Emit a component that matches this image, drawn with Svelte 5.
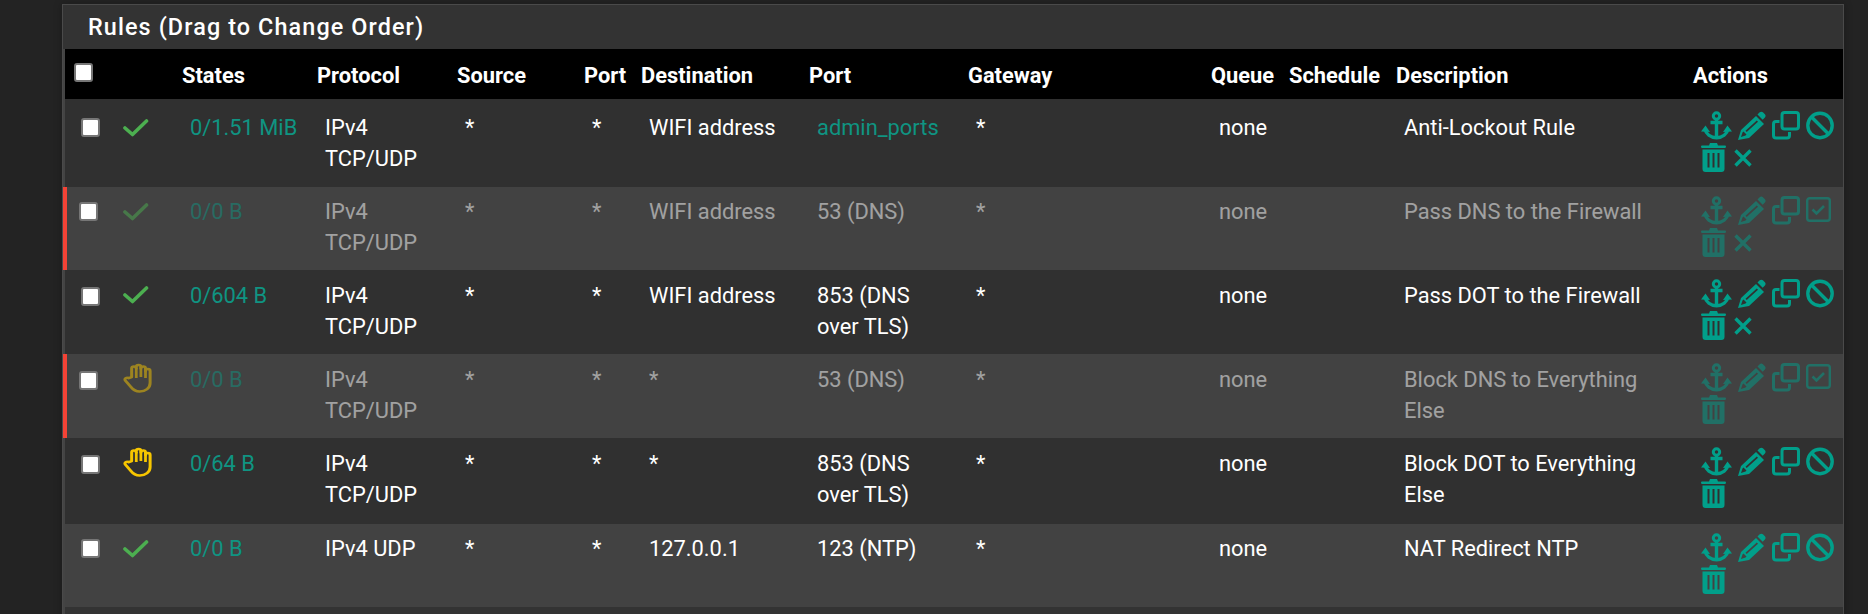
<script>
  // rule table rows, h is the row height taken from the page
  const rules = [
    { h: 88, off: false, icon: "pass", states: "0/1.51 MiB", proto: ["IPv4", "TCP/UDP"], dest: "WIFI address", port: "admin_ports", link: true, desc: "Anti-Lockout Rule", x: true },
    { h: 83, off: true, icon: "pass", states: "0/0 B", proto: ["IPv4", "TCP/UDP"], dest: "WIFI address", port: "53 (DNS)", desc: "Pass DNS to the Firewall", x: true },
    { h: 84, off: false, icon: "pass", states: "0/604 B", proto: ["IPv4", "TCP/UDP"], dest: "WIFI address", port: "853 (DNS over TLS)", desc: "Pass DOT to the Firewall", x: true },
    { h: 84, off: true, icon: "block", states: "0/0 B", proto: ["IPv4", "TCP/UDP"], dest: "*", port: "53 (DNS)", desc: "Block DNS to Everything Else", x: false },
    { h: 86, off: false, icon: "block", states: "0/64 B", proto: ["IPv4", "TCP/UDP"], dest: "*", port: "853 (DNS over TLS)", desc: "Block DOT to Everything Else", x: false },
    { h: 83, off: false, icon: "pass", states: "0/0 B", proto: ["IPv4 UDP"], dest: "127.0.0.1", port: "123 (NTP)", desc: "NAT Redirect NTP", x: false }
  ];

  const cols = [49, 60, 135, 140, 127, 57, 168, 159, 243, 78, 107, 297, 158];
</script>

{#snippet anchor()}
  <svg class="ic" width="31" height="29" viewBox="0 0 31 29">
    <circle cx="15.5" cy="5" r="3.200" fill="none" stroke="currentColor" stroke-width="3" />
    <path d="M9.500 11.500h12M15.500 8v19" fill="none" stroke="currentColor" stroke-width="3.400" />
    <path d="M4 18c1 5 5.500 8.800 11.500 8.800S26 23 27 18" fill="none" stroke="currentColor" stroke-width="3.400" />
    <path d="M0 20.500l4.500-6 4.500 6.500zM31 20.500l-4.500-6-4.500 6.500z" fill="currentColor" />
  </svg>
{/snippet}

{#snippet pencil()}
  <svg class="ic" width="28" height="29" viewBox="0 0 28 29">
    <path fill-rule="evenodd" fill="currentColor" d="M0 29l3-10L18 5l8 8-15 14zM4.500 21.500l-1.500 4.500 4.500-1.500 1-1-3-3zM7.500 19.800l1.200 1.200L20 10.800l-1.200-1.200z" />
    <path fill="currentColor" d="M19.500 3.500l2.200-2.200c.9-.9 2.300-.9 3.200 0l2 2c.9.9.9 2.300 0 3.200l-2.200 2.200z" />
  </svg>
{/snippet}

{#snippet clone()}
  <svg class="ic" width="28" height="29" viewBox="0 0 28 29">
    <rect x="10" y="1.500" width="16.500" height="16.500" rx="2.500" fill="none" stroke="currentColor" stroke-width="3" />
    <path d="M7.500 10.500H4a2.500 2.500 0 0 0-2.500 2.500v11.500A2.500 2.500 0 0 0 4 27h11a2.500 2.500 0 0 0 2.500-2.500V21" fill="none" stroke="currentColor" stroke-width="3" />
  </svg>
{/snippet}

{#snippet ban()}
  <svg class="ic" width="28" height="29" viewBox="0 0 28 29">
    <circle cx="14" cy="14.500" r="12.200" fill="none" stroke="currentColor" stroke-width="3.400" />
    <path d="M5.500 6l17 17" stroke="currentColor" stroke-width="3.400" />
  </svg>
{/snippet}

{#snippet checkSquare()}
  <svg class="ic" width="28" height="29" viewBox="0 0 28 29">
    <rect x="1.200" y="2.200" width="22.600" height="22.600" rx="2.500" fill="none" stroke="currentColor" stroke-width="2.400" />
    <path d="M6.500 13.500l4 4 7.500-7.500" fill="none" stroke="currentColor" stroke-width="2.600" />
  </svg>
{/snippet}

{#snippet trash()}
  <svg class="ic" width="25" height="29" viewBox="0 0 25 29">
    <path fill="currentColor" d="M1 2.500h7L9 0h7l1 2.500h7c.6 0 1 .6 1 1.300s-.4 1.200-1 1.200H1c-.6 0-1-.5-1-1.200s.4-1.300 1-1.300z" />
    <path fill="currentColor" fill-rule="evenodd" d="M1.500 6.500h22V26a3 3 0 0 1-3 3h-16a3 3 0 0 1-3-3zM6.500 10v14.500h2V10zM11.500 10v14.500h2V10zM16.500 10v14.500h2V10z" />
  </svg>
{/snippet}

{#snippet times()}
  <svg class="ic times" width="18" height="18" viewBox="0 0 18 18">
    <path d="M1.500 1.500l15 15M16.500 1.500l-15 15" stroke="currentColor" stroke-width="3.400" />
  </svg>
{/snippet}

{#snippet passIcon()}
  <svg class="state pass" width="26" height="18" viewBox="0 0 26 18">
    <path d="M2 9l7.500 6.500L23.500 2" fill="none" stroke="currentColor" stroke-width="3.600" stroke-linecap="round" stroke-linejoin="round" />
  </svg>
{/snippet}

{#snippet blockIcon()}
  <svg class="state block" width="30" height="30" viewBox="0 0 26 30" preserveAspectRatio="none">
    <path d="M7.500 14V5.500a2 2 0 0 1 4 0V4a2 2 0 0 1 4 0v1.500a2 2 0 0 1 4 0V8a2 2 0 0 1 4 0v12c0 5-4 8.500-9 8.500-4 0-6-2-8-5l-4.500-6c-1-1.500 1-3.500 3-2.300z" fill="none" stroke="currentColor" stroke-width="2.600" stroke-linejoin="round" />
    <path d="M11.500 5v10M15.500 4v10M19.500 6v9" stroke="currentColor" stroke-width="2.400" />
  </svg>
{/snippet}

<div class="panel">
  <h2>Rules (Drag to Change Order)</h2>
  <table>
    <colgroup>
      {#each cols as w}
        <col style="width:{w}px" />
      {/each}
    </colgroup>
    <thead>
      <tr>
        <th class="sel"><input type="checkbox" /></th>
        <th></th>
        <th>States</th>
        <th>Protocol</th>
        <th>Source</th>
        <th>Port</th>
        <th>Destination</th>
        <th>Port</th>
        <th>Gateway</th>
        <th>Queue</th>
        <th>Schedule</th>
        <th>Description</th>
        <th>Actions</th>
      </tr>
    </thead>
    <tbody>
      {#each rules as r}
        <tr class:off={r.off} style="height:{r.h}px">
          <td class="sel"><input type="checkbox" /></td>
          <td class="stateicon">
            {#if r.icon === "pass"}
              {@render passIcon()}
            {:else}
              {@render blockIcon()}
            {/if}
          </td>
          <td class="teal states">{r.states}</td>
          <td>
            {#each r.proto as p}
              <div>{p}</div>
            {/each}
          </td>
          <td>*</td>
          <td>*</td>
          <td>{r.dest}</td>
          <td class:teal={r.link}>{r.port}</td>
          <td>*</td>
          <td>none</td>
          <td></td>
          <td>{r.desc}</td>
          <td class="actions">
            <div class="icons">
              {@render anchor()}
              {@render pencil()}
              {@render clone()}
              {#if r.off}
                {@render checkSquare()}
              {:else}
                {@render ban()}
              {/if}
              {@render trash()}
              {#if r.x}
                {@render times()}
              {/if}
            </div>
          </td>
        </tr>
      {/each}
    </tbody>
  </table>
  <div class="rest"></div>
</div>

<style>
  :global(body) {
    background: #232323;
    overflow: hidden;
    font-family: Roboto, "Liberation Sans", sans-serif;
  }
  .panel {
    margin: 4px 24px 0 62px;
    padding: 0 0 0 2px;
    background: #444;
    border-top: 1px solid #4a4a4a;
    border-left: 1px solid #4a4a4a;
    border-right: 1px solid #4a4a4a;
    box-sizing: border-box;
    height: 640px;
    box-shadow: 0 0 8px rgba(0, 0, 0, 0.25);
  }
  h2 {
    margin: 0 0 0 -2px;
    height: 44px;
    line-height: 44px;
    padding-left: 25px;
    background: #333;
    font-size: 23.400px;
    font-weight: 500;
    letter-spacing: 1.100px;
    color: #fff;
  }
  table {
    width: 1778px;
    table-layout: fixed;
    border-collapse: collapse;
    color: #fff;
    font-size: 21.850px;
    line-height: 31px;
  }
  thead tr {
    background: #000;
    height: 50px;
  }
  th {
    text-align: left;
    font-weight: 700;
    font-size: 21.850px;
    padding: 2px 0 0 8px;
    vertical-align: middle;
  }
  th.sel {
    padding-left: 9px;
  }
  th.sel input {
    margin-top: -6px;
  }
  tbody tr {
    background: #424242;
  }
  tbody tr:nth-child(odd) {
    background: #303030;
  }
  td {
    padding: 10px 16px 0;
    vertical-align: top;
    box-sizing: border-box;
  }
  tbody tr:nth-child(4n + 2) td {
    padding-top: 9px;
  }
  tbody tr:first-child td {
    padding-top: 13px;
  }
  .off td:not(.sel) {
    opacity: 0.5;
  }
  td.sel {
    position: relative;
    padding-right: 0;
  }
  tbody tr:first-child td.sel {
    padding-top: 12px;
  }
  tbody tr:nth-child(4n + 2) td.sel {
    padding-top: 8px;
  }
  .off td.sel {
    padding-left: 14px;
  }
  .off td.sel::before {
    content: "";
    position: absolute;
    left: -2px;
    top: 0;
    bottom: 0;
    width: 4px;
    background: #f44336;
  }
  td.stateicon {
    padding: 9px 0 0 9px;
  }
  td.states {
    padding-right: 0;
  }
  input {
    appearance: none;
    display: block;
    width: 19px;
    height: 19px;
    margin: 7px 0 0;
    background: #fff;
    border: 2px solid #767676;
    border-radius: 3px;
    box-sizing: border-box;
  }
  .teal {
    color: #0f9482;
  }
  .state {
    display: block;
    margin-top: 7px;
  }
  .pass {
    color: #4caf50;
  }
  .block {
    color: #f7c600;
    margin-top: 0;
  }
  td.actions {
    padding: 9px 0 0 16px;
    color: #019f8a;
  }
  tbody tr:first-child td.actions {
    padding-top: 12px;
  }
  .icons {
    display: flex;
    flex-wrap: wrap;
    column-gap: 6px;
    row-gap: 3px;
    width: 135px;
  }
  .ic {
    display: block;
  }
  .times {
    margin: 6px 0 0 2px;
  }
  .rest {
    height: 30px;
    background: #333;
  }
</style>
